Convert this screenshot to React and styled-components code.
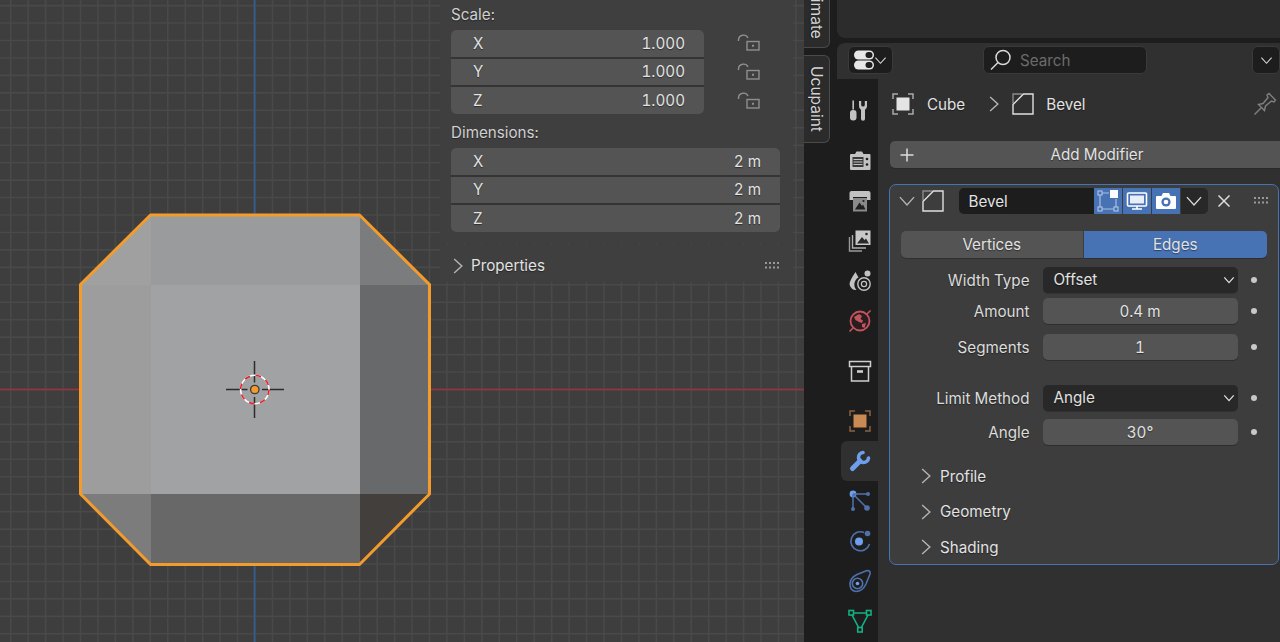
import styled, { createGlobalStyle } from 'styled-components';

const GlobalStyle = createGlobalStyle`
    html, body {
        margin: 0;
        padding: 0;
        background: #1d1d1d;
    }
    * {
        box-sizing: border-box;
    }
`;

const Page = styled.div`
    display: flex;
    width: 1280px;
    height: 642px;
    overflow: hidden;
    background: #1d1d1d;
    color: #e2e2e2;
    font-family: Inter, 'Liberation Sans', sans-serif;
    font-size: 15.2px;
    font-variant-numeric: tabular-nums;
    text-shadow: 0 1px 1px rgba(0, 0, 0, 0.45);
`;

/* 3D viewport */
const Viewport = styled.div`
    position: relative;
    flex: 0 0 804px;
    height: 642px;
    background-color: #3e3e3e;
`;

const SceneSvg = styled.svg`
    position: absolute;
    top: 0;
    left: 0;
`;

const SidePanel = styled.div`
    position: absolute;
    top: 0;
    left: 440px;
    width: 353px;
    display: flex;
    flex-direction: column;
    gap: 1px;
`;

const SideSection = styled.div`
    background: #3f3f3f;
    padding: ${({ $padding }) => $padding || '0'};
    height: ${({ $height }) => $height};
`;

const GroupLabel = styled.div`
    height: 26px;
    line-height: 26px;
    margin-top: ${({ $top }) => $top || '0'};
    margin-bottom: ${({ $bottom }) => $bottom || '3px'};
    color: #d0d0d0;
`;

const ScaleRow = styled.div`
    display: flex;
`;

const FieldGroup = styled.div`
    display: flex;
    flex-direction: column;
    gap: 2px;
    flex: 0 0 ${({ $width }) => $width};
    background: #343434;
    border-radius: 5px;
    overflow: hidden;
`;

const AxisField = styled.div`
    display: flex;
    align-items: center;
    justify-content: space-between;
    height: 26.67px;
    padding: 0 19px 0.5px 22px;
    background: #545454;
`;

const LockColumn = styled.div`
    display: flex;
    flex-direction: column;
    gap: 2px;
    margin-left: 33px;
`;

const LockCell = styled.div`
    display: flex;
    align-items: center;
    justify-content: center;
    width: 24px;
    height: 26.67px;
`;

const PropertiesRow = styled.div`
    display: flex;
    align-items: center;
    height: 37px;
    padding: 4px 11px 0 9px;
    gap: 4px;
`;

const Spacer = styled.div`
    flex: 1;
`;

/* N panel tabs */
const TabStrip = styled.div`
    flex: 0 0 33px;
    display: flex;
    flex-direction: column;
    gap: 7px;
    background: #1d1d1d;
`;

const SideTab = styled.div`
    display: flex;
    align-items: center;
    justify-content: center;
    flex: 0 0 auto;
    width: 26px;
    height: ${({ $height }) => $height};
    margin-top: ${({ $top }) => $top || '0'};
    writing-mode: vertical-rl;
    font-size: 15.5px;
    color: #d4d4d4;
    background: #2b2b2b;
    border: 1px solid #4a4a4a;
    border-left: none;
    border-radius: 0 6px 6px 0;
`;

/* right column */
const RightColumn = styled.div`
    flex: 1;
    display: flex;
    flex-direction: column;
    gap: 5px;
    min-width: 0;
`;

const Timeline = styled.div`
    height: 38px;
    background: #2c2c2c;
    border-radius: 0 0 0 8px;
`;

const PropertiesEditor = styled.div`
    flex: 1;
    display: flex;
    flex-direction: column;
    background: #303030;
    border-radius: 8px 0 0 0;
    overflow: hidden;
`;

const EditorHeader = styled.div`
    display: flex;
    align-items: center;
    flex: 0 0 36px;
    padding: 0 0 2px 11px;
`;

const HeaderButton = styled.div`
    display: flex;
    align-items: center;
    justify-content: center;
    width: ${({ $width }) => $width};
    height: 28px;
    margin-left: ${({ $left }) => $left || '0'};
    background: #1d1d1d;
    border: 1px solid #3a3a3a;
    border-radius: 6px;
`;

const SearchBox = styled.div`
    display: flex;
    align-items: center;
    gap: 8px;
    width: 164px;
    height: 28px;
    margin-left: 90px;
    padding-left: 6px;
    background: #1d1d1d;
    border: 1px solid #3a3a3a;
    border-radius: 6px;
    color: #6b6b6b;
    text-shadow: none;
`;

const EditorBody = styled.div`
    flex: 1;
    display: flex;
    min-height: 0;
`;

const NavBar = styled.div`
    flex: 0 0 41px;
    display: flex;
    flex-direction: column;
    gap: 10.25px;
    padding: 11.5px 0 0 4px;
    background: #1d1d1d;
`;

const NavGroup = styled.div`
    display: flex;
    flex-direction: column;
`;

const NavCell = styled.div`
    display: flex;
    align-items: center;
    justify-content: center;
    height: 40px;
    background: ${({ $active }) => ($active ? '#303030' : 'transparent')};
    border-radius: 6px 0 0 6px;
`;

const Content = styled.div`
    flex: 1;
    min-width: 0;
    padding-left: 11px;
`;

const Breadcrumb = styled.div`
    display: flex;
    align-items: center;
    height: 50px;
    padding: 0 3px 0 3px;
`;

const CrumbText = styled.span`
    margin-left: ${({ $left }) => $left};
`;

const CrumbIcon = styled.span`
    display: flex;
    margin-left: ${({ $left }) => $left || '0'};
`;

const AddButton = styled.div`
    display: flex;
    align-items: center;
    height: 27px;
    margin-top: 12px;
    margin-left: 1px;
    padding-left: 10px;
    background: #545454;
    border-radius: 5px 0 0 5px;
    box-shadow: 0 1px 0 #292929;
`;

const AddLabel = styled.span`
    flex: 1;
    text-align: center;
`;

const ModifierPanel = styled.div`
    width: 390px;
    height: 381px;
    margin-top: 16px;
    padding-top: 2.5px;
    background: #3d3d3d;
    border: 1.5px solid #4772b3;
    border-radius: 7px;
`;

const ModifierHeader = styled.div`
    display: flex;
    align-items: center;
    height: 26px;
    padding-left: 7.5px;
`;

const NameField = styled.div`
    display: flex;
    align-items: center;
    width: 135px;
    height: 26px;
    margin-left: 15px;
    padding: 1px 0 0 10px;
    background: #1d1d1d;
    border-radius: 5px 0 0 5px;
`;

const ToggleButton = styled.div`
    display: flex;
    align-items: center;
    justify-content: center;
    width: 28px;
    height: 26px;
    margin-right: 1px;
    background: #4772b3;
`;

const ExtrasButton = styled.div`
    display: flex;
    align-items: center;
    justify-content: center;
    width: 27px;
    height: 26px;
    background: #282828;
    border-radius: 0 5px 5px 0;
`;

const CloseIcon = styled.span`
    display: flex;
    margin-left: 9px;
`;

const Grip = styled.span`
    display: flex;
    margin-left: ${({ $left }) => $left};
`;

const ModeTabs = styled.div`
    display: flex;
    gap: 1px;
    width: 366px;
    height: 27px;
    margin: 17px 0 0 10.5px;
`;

const ModeTab = styled.div`
    flex: 1;
    display: flex;
    align-items: center;
    justify-content: center;
    background: ${({ $active }) => ($active ? '#4772b3' : '#545454')};
    border-radius: ${({ $active }) => ($active ? '0 5px 5px 0' : '5px 0 0 5px')};
    box-shadow: 0 1px 0 #2e2e2e;
`;

const PropRow = styled.div`
    display: grid;
    grid-template-columns: 152.5px 195px 32px;
    align-items: center;
    height: 26px;
    margin-top: ${({ $top }) => $top};
`;

const PropLabel = styled.div`
    padding: 1px 13px 0 0;
    text-align: right;
    color: #dcdcdc;
`;

const SelectField = styled.div`
    display: flex;
    align-items: center;
    justify-content: space-between;
    height: 26px;
    padding: 0 3px 0 11px;
    background: #282828;
    border-radius: 5px;
    box-shadow: 0 1px 0 #323232;
`;

const NumberField = styled.div`
    display: flex;
    align-items: center;
    justify-content: center;
    height: 26px;
    padding-top: 1px;
    background: #545454;
    border-radius: 5px;
    box-shadow: 0 1px 0 #2e2e2e;
`;

const AnimDot = styled.span`
    justify-self: center;
    width: 6px;
    height: 6px;
    border-radius: 50%;
    background: #c8c8c8;
`;

const SubPanels = styled.div`
    margin-top: 14px;
`;

const SubPanel = styled.div`
    display: flex;
    align-items: center;
    gap: 5px;
    height: 35.5px;
    padding-left: 27px;
`;

/* icons */
const Chevron = ({ dir = 'right', size = 18, color = '#b4b4b4', width = 1.1 }) => (
    <svg width={size} height={size} viewBox="0 0 14 14" fill="none" stroke={color} strokeWidth={width}>
        {dir === 'right' ? <path d="M4 1.5 L10 7 L4 12.5" /> : <path d="M1.5 4 L7 10 L12.5 4" />}
    </svg>
);

const LockIcon = () => (
    <svg width="24" height="20" viewBox="0 0 24 20" fill="none" stroke="#8f8f8f" strokeWidth="1.4">
        <path d="M1.5 8 V7 A5 5 0 0 1 11 5" />
        <rect x="10" y="8.5" width="12" height="8.5" />
        <path d="M15 12.7 h2" strokeWidth="2" />
    </svg>
);

const GripIcon = () => (
    <svg width="18" height="9" viewBox="0 0 18 9" fill="#9a9a9a">
        {[1, 5, 9, 13].map(x => (
            <g key={x}>
                <rect x={x} y="1" width="2" height="2" />
                <rect x={x} y="5.5" width="2" height="2" />
            </g>
        ))}
    </svg>
);

const BevelIcon = ({ size = 22 }) => (
    <svg width={size} height={size} viewBox="0 0 22 22" fill="none" strokeWidth="1.4">
        <path d="M1 10.5 V1 H10.5" stroke="#8a8a8a" />
        <path d="M1 21 V11.5 L11.5 1 H21 V21 Z" stroke="#e0e0e0" />
    </svg>
);

const ObjectIcon = ({ color = '#e4e4e4', corner = '#a8a8a8' }) => (
    <svg width="22" height="22" viewBox="0 0 22 22" fill="none">
        <rect x="4.5" y="4.5" width="13" height="13" fill={color} />
        <path d="M1 6 V1 H6 M16 1 H21 V6 M21 16 V21 H16 M6 21 H1 V16" stroke={corner} strokeWidth="1.5" />
    </svg>
);

const PinIcon = () => (
    <svg width="24" height="24" viewBox="0 0 24 24" fill="none" stroke="#7f7f7f" strokeWidth="1.4">
        <path d="M1.5 22.5 L8 16" />
        <path d="M5.5 12.5 L10 11.5 L15 5.5 L14 3 L16 1.5 L22.5 8 L21 10 L18.5 9 L12.5 14 L11.5 18.5 Z" />
    </svg>
);

const PlusIcon = () => (
    <svg width="14" height="14" viewBox="0 0 14 14" stroke="#dcdcdc" strokeWidth="1.5">
        <path d="M7 0.5 V13.5 M0.5 7 H13.5" />
    </svg>
);

const CloseGlyph = () => (
    <svg width="14" height="14" viewBox="0 0 14 14" stroke="#dcdcdc" strokeWidth="1.5">
        <path d="M1.5 1.5 L12.5 12.5 M12.5 1.5 L1.5 12.5" />
    </svg>
);

const EditorTypeIcon = () => (
    <svg width="20" height="20" viewBox="0 0 20 20">
        <rect x="0" y="0.5" width="20" height="9" rx="4.5" fill="#e6e6e6" />
        <rect x="0" y="10.5" width="20" height="9" rx="4.5" fill="#e6e6e6" />
        <rect x="11.5" y="2" width="7" height="6" rx="3" fill="#1d1d1d" />
        <rect x="11.5" y="12" width="7" height="6" rx="3" fill="#1d1d1d" />
    </svg>
);

const SearchIcon = () => (
    <svg width="22" height="22" viewBox="0 0 22 22" fill="none" stroke="#dadada" strokeWidth="1.5">
        <circle cx="13" cy="8.5" r="7" />
        <path d="M8 13.5 L1 20.5" />
    </svg>
);

const ToolIcon = () => (
    <svg width="24" height="24" viewBox="0 0 24 24" fill="#c2c2c2">
        <rect x="4.4" y="1.5" width="1.6" height="9" />
        <rect x="2" y="11" width="6.5" height="10.5" rx="3" />
        <path d="M11 2 L13.2 2 V6 Q13.2 7.5 15 7.5 Q16.8 7.5 16.8 6 V2 L19 2 V7 Q19 10 17 10.8 V20 Q17 21.8 15 21.8 Q13 21.8 13 20 V10.8 Q11 10 11 7 Z" />
    </svg>
);

const RenderIcon = () => (
    <svg width="24" height="24" viewBox="0 0 24 24">
        <path d="M3 5 H7 L8.5 2.5 H14 L15.5 5 H21.5 Q22.5 5 22.5 6 V20 Q22.5 21 21.5 21 H3 Q2 21 2 20 V6 Q2 5 3 5 Z" fill="#c2c2c2" />
        <rect x="4.5" y="8" width="11" height="10" fill="#3a3a3a" />
        <path d="M5.5 10.5 H14.5 M5.5 13 H14.5 M5.5 15.5 H14.5" stroke="#c2c2c2" strokeWidth="1" />
        <circle cx="19" cy="10" r="1.3" fill="#1d1d1d" />
        <circle cx="19" cy="15.5" r="1.3" fill="#1d1d1d" />
    </svg>
);

const OutputIcon = () => (
    <svg width="24" height="24" viewBox="0 0 24 24">
        <path d="M3.5 2 H20.5 Q22.5 2 22.5 4 V11 H19 V8 H5 V11 H1.5 V4 Q1.5 2 3.5 2 Z" fill="#c2c2c2" />
        <rect x="5" y="9" width="14" height="13.5" fill="#8a8a8a" />
        <path d="M7 20.5 L11.5 13.5 L14 17 L15 15.5 L17.5 20.5 Z" fill="#1f1f1f" />
        <circle cx="15.5" cy="12" r="1.1" fill="#1f1f1f" />
    </svg>
);

const ViewLayerIcon = () => (
    <svg width="24" height="24" viewBox="0 0 24 24" fill="none">
        <path d="M1.5 8 V22 H14" stroke="#9a9a9a" strokeWidth="1.4" />
        <path d="M4.5 6 V19 H18" stroke="#b0b0b0" strokeWidth="1.4" />
        <rect x="7.5" y="1.5" width="15" height="14.5" fill="#c8c8c8" />
        <path d="M9 14.5 L14 8 L16.5 11 L18 9.5 L21 14.5 Z" fill="#2a2a2a" />
        <circle cx="18.5" cy="5" r="1.3" fill="#2a2a2a" />
    </svg>
);

const SceneIcon = () => (
    <svg width="24" height="24" viewBox="0 0 24 24" fill="none">
        <path d="M7.5 3 Q2 11 1.5 15 A6.5 6.5 0 0 0 8.5 21 A8 8 0 0 1 10.5 8.5 Z" fill="#c2c2c2" />
        <circle cx="19.5" cy="4.5" r="3" fill="#c2c2c2" />
        <circle cx="16" cy="15" r="6.2" stroke="#c2c2c2" strokeWidth="1.4" />
        <circle cx="16" cy="15" r="2.6" stroke="#c2c2c2" strokeWidth="1.2" />
    </svg>
);

const WorldIcon = () => (
    <svg width="24" height="24" viewBox="0 0 24 24" fill="none">
        <circle cx="12" cy="12" r="9.5" fill="#2a1d20" stroke="#c2545e" strokeWidth="1.8" />
        <path d="M6 8 L11 5 L14 7 L12.5 10 L15 11.5 L14 14 L11 13 L7.5 11 Z M14 15 L18 14 L16.5 19 L14 18 Z" fill="#c2545e" />
        <path d="M1.5 22.5 L5 19 M19 5 L22.5 1.5" stroke="#c2545e" strokeWidth="1.6" />
    </svg>
);

const CollectionIcon = () => (
    <svg width="24" height="24" viewBox="0 0 24 24" fill="none" stroke="#cfcfcf" strokeWidth="1.5">
        <rect x="1.5" y="2.5" width="21" height="5" />
        <path d="M3.5 7.5 V22 H20.5 V7.5" />
        <path d="M9 12.5 H15" strokeWidth="2.6" />
    </svg>
);

const ModifierIcon = () => (
    <svg width="24" height="24" viewBox="0 0 24 24" fill="none" stroke="#6f9fec" strokeLinecap="round">
        <path d="M4.5 19.5 L12 12" strokeWidth="5" />
        <path d="M15 3.5 A5 5 0 1 0 20.5 9" strokeWidth="3.6" />
    </svg>
);

const ParticlesIcon = () => (
    <svg width="24" height="24" viewBox="0 0 24 24" fill="#4e71ac" stroke="#4e71ac" strokeWidth="1.5">
        <circle cx="5" cy="5" r="3.4" fill="#6f9fec" stroke="none" />
        <path d="M5 5 H19 M5 5 V19 M5 5 L18.5 18.5" />
        <circle cx="20" cy="5" r="2" stroke="none" />
        <circle cx="5" cy="20" r="2" stroke="none" />
        <circle cx="19" cy="19" r="2.8" stroke="none" />
    </svg>
);

const PhysicsIcon = () => (
    <svg width="24" height="24" viewBox="0 0 24 24" fill="none">
        <path d="M16 3.5 A9.5 9.5 0 1 0 21.5 15" stroke="#4e71ac" strokeWidth="1.6" />
        <circle cx="11" cy="12.5" r="4" fill="#6f9fec" />
        <circle cx="19.5" cy="4.5" r="2.8" fill="#4e71ac" />
    </svg>
);

const ConstraintIcon = () => (
    <svg width="24" height="24" viewBox="0 0 24 24" fill="none" stroke="#4e71ac" strokeWidth="1.6">
        <path d="M2 15 Q2 9 9 5.5 L19 1.5 Q22.8 1.5 22 5 L18 15 Q14.5 22.5 8 22.5 Q2 22 2 15 Z" />
        <circle cx="9.5" cy="14.5" r="5.2" />
        <circle cx="9.5" cy="14.5" r="1.8" fill="#6f9fec" stroke="none" />
    </svg>
);

const DataIcon = () => (
    <svg width="24" height="24" viewBox="0 0 24 24" fill="none" stroke="#12b082" strokeWidth="1.6">
        <path d="M3 4 H21 L12 21 Z" />
        <rect x="1" y="1.5" width="4.5" height="4.5" fill="#1d1d1d" />
        <rect x="18.5" y="1.5" width="4.5" height="4.5" fill="#1d1d1d" />
        <rect x="9.7" y="18.5" width="4.5" height="4.5" fill="#1d1d1d" />
    </svg>
);

const VertexIcon = () => (
    <svg width="22" height="22" viewBox="0 0 22 22" fill="none" stroke="#aac0e2" strokeWidth="1.2">
        <path d="M5 3 H12 M3 5 V17 M5 19 H17 M19 9 V17" />
        <rect x="1" y="1" width="4" height="4" />
        <rect x="1" y="17" width="4" height="4" />
        <rect x="17" y="17" width="4" height="4" />
        <rect x="13" y="0" width="8" height="8" fill="#ffffff" stroke="none" />
    </svg>
);

const MonitorIcon = () => (
    <svg width="22" height="22" viewBox="0 0 22 22" fill="none">
        <rect x="1.5" y="3" width="19" height="13" rx="1" stroke="#ffffff" strokeWidth="1.6" />
        <rect x="4" y="5.5" width="14" height="8" fill="#e8eef8" />
        <path d="M6 19 H16 M11 16 V19" stroke="#ffffff" strokeWidth="1.6" />
    </svg>
);

const CameraIcon = () => (
    <svg width="22" height="22" viewBox="0 0 22 22" fill="none">
        <path d="M2 6 H6.5 L8 3 H14 L15.5 6 H20 Q21 6 21 7 V18 Q21 19 20 19 H2 Q1 19 1 18 V7 Q1 6 2 6 Z" fill="#ffffff" />
        <circle cx="11" cy="12" r="4.6" fill="#4772b3" />
        <circle cx="11" cy="12" r="2.3" fill="#ffffff" />
    </svg>
);

const gridStep = 17.45;
const gridXs = Array.from({ length: 47 }, (_, i) => 10.7 + i * gridStep);
const gridYs = Array.from({ length: 37 }, (_, i) => 5.6 + i * gridStep);

const Scene = () => (
    <SceneSvg width="804" height="642" viewBox="0 0 804 642">
        <g stroke="#494949" strokeWidth="1.6">
            {gridXs.map(x => <path key={x} d={`M${x} 0 V642`} />)}
            {gridYs.map(y => <path key={y} d={`M0 ${y} H804`} />)}
        </g>
        <path d="M254.5 0 V642" stroke="#2f5f96" strokeWidth="1.6" />
        <path d="M0 389.5 H804" stroke="#9a3040" strokeWidth="1.6" />

        <g shapeRendering="crispEdges">
            <rect x="150.5" y="284.5" width="209" height="209.5" fill="#a1a2a4" />
            <path d="M150.5 215 H359.5 V284.5 H150.5 Z" fill="#9a9b9d" />
            <path d="M80.5 284.5 H150.5 V494 H80.5 Z" fill="#9c9d9c" />
            <path d="M359.5 284.5 H429.5 V494 H359.5 Z" fill="#68696b" />
            <path d="M150.5 494 H359.5 V564.5 H150.5 Z" fill="#676867" />
            <path d="M150.5 215 V284.5 H80.5 Z" fill="#9fa09f" />
            <path d="M359.5 215 L429.5 284.5 H359.5 Z" fill="#7b7c7d" />
            <path d="M80.5 494 H150.5 V564.5 Z" fill="#7b7c7b" />
            <path d="M359.5 494 H429.5 L359.5 564.5 Z" fill="#423f3d" />
        </g>
        <path
            d="M150.5 215 H359.5 L429.5 284.5 V494 L359.5 564.5 H150.5 L80.5 494 V284.5 Z"
            fill="none"
            stroke="#f39c2c"
            strokeWidth="3"
            strokeLinejoin="round"
        />

        <path d="M226 389.5 H247.5 M262 389.5 H284 M254.5 361 V382.5 M254.5 397 V418" stroke="#2c2c2c" strokeWidth="1.5" />
        <circle cx="254.8" cy="389.5" r="14.2" fill="none" stroke="#ffffff" strokeWidth="1.6" />
        <circle cx="254.8" cy="389.5" r="14.2" fill="none" stroke="#e8202a" strokeWidth="1.6" strokeDasharray="5.6 5.6" />
        <circle cx="254.8" cy="389.5" r="4.2" fill="#f39c2c" stroke="#3a3a3a" strokeWidth="1.3" />
    </SceneSvg>
);

const scale = ['X', 'Y', 'Z'];

const App = () => (
    <Page>
        <GlobalStyle />
        <Viewport>
            <Scene />
            <SidePanel>
                <SideSection $height="244px" $padding="2px 13px 0 11px">
                    <GroupLabel $bottom="2px">Scale:</GroupLabel>
                    <ScaleRow>
                        <FieldGroup $width="253px">
                            {scale.map(axis => (
                                <AxisField key={axis}>
                                    <span>{axis}</span>
                                    <span>1.000</span>
                                </AxisField>
                            ))}
                        </FieldGroup>
                        <LockColumn>
                            {scale.map(axis => (
                                <LockCell key={axis}>
                                    <LockIcon />
                                </LockCell>
                            ))}
                        </LockColumn>
                    </ScaleRow>
                    <GroupLabel $top="6px" $bottom="2px">Dimensions:</GroupLabel>
                    <FieldGroup $width="auto">
                        {scale.map(axis => (
                            <AxisField key={axis}>
                                <span>{axis}</span>
                                <span>2 m</span>
                            </AxisField>
                        ))}
                    </FieldGroup>
                </SideSection>
                <SideSection>
                    <PropertiesRow>
                        <Chevron />
                        <span>Properties</span>
                        <Spacer />
                        <GripIcon />
                    </PropertiesRow>
                </SideSection>
            </SidePanel>
        </Viewport>

        <TabStrip>
            <SideTab $height="78px" $top="-30px">Animate</SideTab>
            <SideTab $height="88px">Ucupaint</SideTab>
        </TabStrip>

        <RightColumn>
            <Timeline />
            <PropertiesEditor>
                <EditorHeader>
                    <HeaderButton $width="45px">
                        <EditorTypeIcon />
                        <Chevron dir="down" size={13} color="#dcdcdc" />
                    </HeaderButton>
                    <SearchBox>
                        <SearchIcon />
                        <span>Search</span>
                    </SearchBox>
                    <HeaderButton $width="28px" $left="105px">
                        <Chevron dir="down" size={13} color="#dcdcdc" />
                    </HeaderButton>
                </EditorHeader>
                <EditorBody>
                    <NavBar>
                        <NavGroup>
                            <NavCell><ToolIcon /></NavCell>
                        </NavGroup>
                        <NavGroup>
                            <NavCell><RenderIcon /></NavCell>
                            <NavCell><OutputIcon /></NavCell>
                            <NavCell><ViewLayerIcon /></NavCell>
                            <NavCell><SceneIcon /></NavCell>
                            <NavCell><WorldIcon /></NavCell>
                        </NavGroup>
                        <NavGroup>
                            <NavCell><CollectionIcon /></NavCell>
                        </NavGroup>
                        <NavGroup>
                            <NavCell><ObjectIcon color="#c98a53" corner="#8a6242" /></NavCell>
                            <NavCell $active><ModifierIcon /></NavCell>
                            <NavCell><ParticlesIcon /></NavCell>
                            <NavCell><PhysicsIcon /></NavCell>
                            <NavCell><ConstraintIcon /></NavCell>
                            <NavCell><DataIcon /></NavCell>
                        </NavGroup>
                    </NavBar>
                    <Content>
                        <Breadcrumb>
                            <ObjectIcon />
                            <CrumbText $left="13px">Cube</CrumbText>
                            <CrumbIcon $left="20px"><Chevron /></CrumbIcon>
                            <CrumbIcon $left="9px"><BevelIcon /></CrumbIcon>
                            <CrumbText $left="12px">Bevel</CrumbText>
                            <Spacer />
                            <PinIcon />
                        </Breadcrumb>
                        <AddButton>
                            <PlusIcon />
                            <AddLabel>Add Modifier</AddLabel>
                        </AddButton>
                        <ModifierPanel>
                            <ModifierHeader>
                                <Chevron dir="down" />
                                <CrumbIcon $left="6px"><BevelIcon /></CrumbIcon>
                                <NameField>Bevel</NameField>
                                <ToggleButton><VertexIcon /></ToggleButton>
                                <ToggleButton><MonitorIcon /></ToggleButton>
                                <ToggleButton><CameraIcon /></ToggleButton>
                                <ExtrasButton>
                                    <Chevron dir="down" color="#d8d8d8" />
                                </ExtrasButton>
                                <CloseIcon><CloseGlyph /></CloseIcon>
                                <Grip $left="22px"><GripIcon /></Grip>
                            </ModifierHeader>
                            <ModeTabs>
                                <ModeTab>Vertices</ModeTab>
                                <ModeTab $active>Edges</ModeTab>
                            </ModeTabs>
                            <PropRow $top="9px">
                                <PropLabel>Width Type</PropLabel>
                                <SelectField>
                                    Offset
                                    <Chevron dir="down" size={12} color="#e0e0e0" width={1.5} />
                                </SelectField>
                                <AnimDot />
                            </PropRow>
                            <PropRow $top="5px">
                                <PropLabel>Amount</PropLabel>
                                <NumberField>0.4 m</NumberField>
                                <AnimDot />
                            </PropRow>
                            <PropRow $top="10px">
                                <PropLabel>Segments</PropLabel>
                                <NumberField>1</NumberField>
                                <AnimDot />
                            </PropRow>
                            <PropRow $top="25px">
                                <PropLabel>Limit Method</PropLabel>
                                <SelectField>
                                    Angle
                                    <Chevron dir="down" size={12} color="#e0e0e0" width={1.5} />
                                </SelectField>
                                <AnimDot />
                            </PropRow>
                            <PropRow $top="8px">
                                <PropLabel>Angle</PropLabel>
                                <NumberField>30°</NumberField>
                                <AnimDot />
                            </PropRow>
                            <SubPanels>
                                <SubPanel><Chevron /><span>Profile</span></SubPanel>
                                <SubPanel><Chevron /><span>Geometry</span></SubPanel>
                                <SubPanel><Chevron /><span>Shading</span></SubPanel>
                            </SubPanels>
                        </ModifierPanel>
                    </Content>
                </EditorBody>
            </PropertiesEditor>
        </RightColumn>
    </Page>
);

export default App;
